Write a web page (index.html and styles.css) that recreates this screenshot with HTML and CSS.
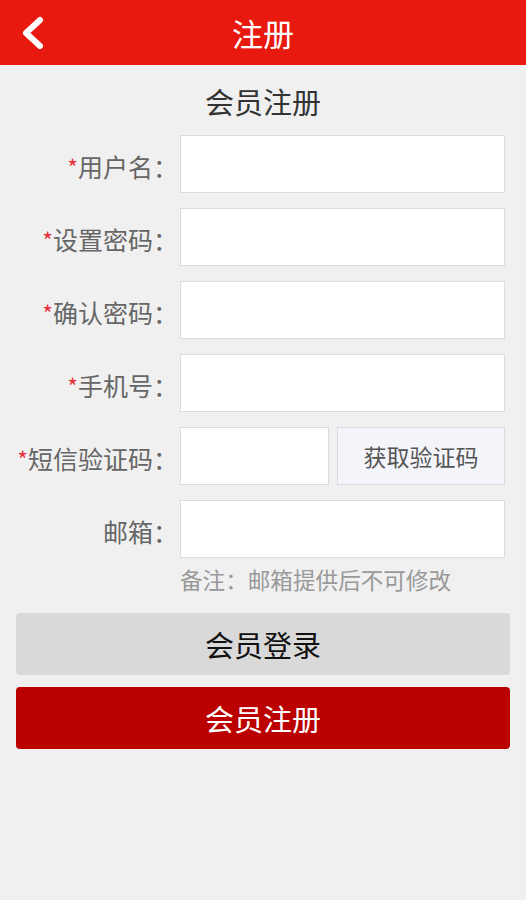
FILE: index.html
```html
<!DOCTYPE html>
<html lang="zh">
<head>
<meta charset="utf-8">
<title>注册</title>
<link rel="stylesheet" href="styles.css">
</head>
<body>
<header class="topbar">
  <a class="back" href="#"><svg width="26" height="34" viewBox="0 0 26 34"><polyline points="20,4 6,17 20,30" fill="none" stroke="#fff" stroke-width="6" stroke-linecap="round" stroke-linejoin="round"/></svg></a>
  <h1 class="topbar-title">注册</h1>
</header>
<main class="content">
  <h2 class="form-title">会员注册</h2>
  <form class="form">
    <div class="row"><label class="label"><span class="req">*</span>用户名：</label><input class="input" type="text"></div>
    <div class="row"><label class="label"><span class="req">*</span>设置密码：</label><input class="input" type="password"></div>
    <div class="row"><label class="label"><span class="req">*</span>确认密码：</label><input class="input" type="password"></div>
    <div class="row"><label class="label"><span class="req">*</span>手机号：</label><input class="input" type="text"></div>
    <div class="row"><label class="label"><span class="req">*</span>短信验证码：</label><div class="sms"><input class="input input-sms" type="text"><button type="button" class="sms-btn">获取验证码</button></div></div>
    <div class="row"><label class="label">邮箱：</label><input class="input" type="text"></div>
    <div class="note">备注：邮箱提供后不可修改</div>
    <div class="actions">
      <button type="button" class="btn btn-login">会员登录</button>
      <button type="button" class="btn btn-reg">会员注册</button>
    </div>
  </form>
</main>
</body>
</html>
```
FILE: styles.css
```css
* { box-sizing: border-box; }
html, body { margin: 0; padding: 0; }
body {
  background: #f0f0f0;
  font-family: "Noto Sans CJK SC", "Noto Sans", sans-serif;
  width: 526px;
  min-height: 900px;
}
.topbar {
  height: 65px;
  background: #e8190f;
  display: flex;
  align-items: center;
  justify-content: center;
  position: relative;
}
.back {
  position: absolute;
  left: 20px;
  top: 16px;
  display: block;
  width: 26px;
  height: 34px;
}
.back svg { display: block; }
.topbar-title {
  margin: 0;
  color: #fff;
  font-size: 31px;
  font-weight: normal;
  line-height: 1;
}
.content { padding: 0; }
.form-title {
  margin: 0;
  padding-top: 18px;
  height: 70px;
  text-align: center;
  font-size: 29px;
  font-weight: normal;
  color: #333;
  line-height: 36px;
}
.form { display: flex; flex-direction: column; }
.row {
  display: flex;
  align-items: center;
  height: 58px;
  margin-bottom: 15px;
}
.label {
  width: 180px;
  padding-right: 2px;
  text-align: right;
  font-size: 25px;
  color: #666;
  white-space: nowrap;
  padding-top: 4px;
}
.req { color: #e8323c; font-size: 23px; }
.input {
  width: 325px;
  height: 58px;
  border: 1px solid #dcdcdc;
  background: #fff;
  margin: 0;
  padding: 0 8px;
  font-size: 20px;
  outline: none;
}
.sms { display: flex; gap: 8px; width: 325px; }
.input-sms { width: 149px; }
.sms-btn {
  width: 168px;
  height: 58px;
  border: 1px solid #dcdcdc;
  background: #f4f5fa;
  color: #555;
  font-family: inherit;
  font-size: 23px;
  margin: 0;
  padding: 0;
}
.note {
  margin-top: -13px;
  padding-left: 180px;
  font-size: 22.6px;
  color: #999;
  height: 40px;
  line-height: 40px;
}
.actions {
  margin-top: 13px;
  padding: 0 16px;
  display: flex;
  flex-direction: column;
  gap: 12px;
}
.btn {
  width: 494px;
  height: 62px;
  border: none;
  border-radius: 4px;
  font-family: inherit;
  font-size: 29px;
  margin: 0;
  padding: 0;
}
.btn-login { background: #d9d9d9; color: #111; }
.btn-reg { background: #bb0000; color: #fff; }
```
